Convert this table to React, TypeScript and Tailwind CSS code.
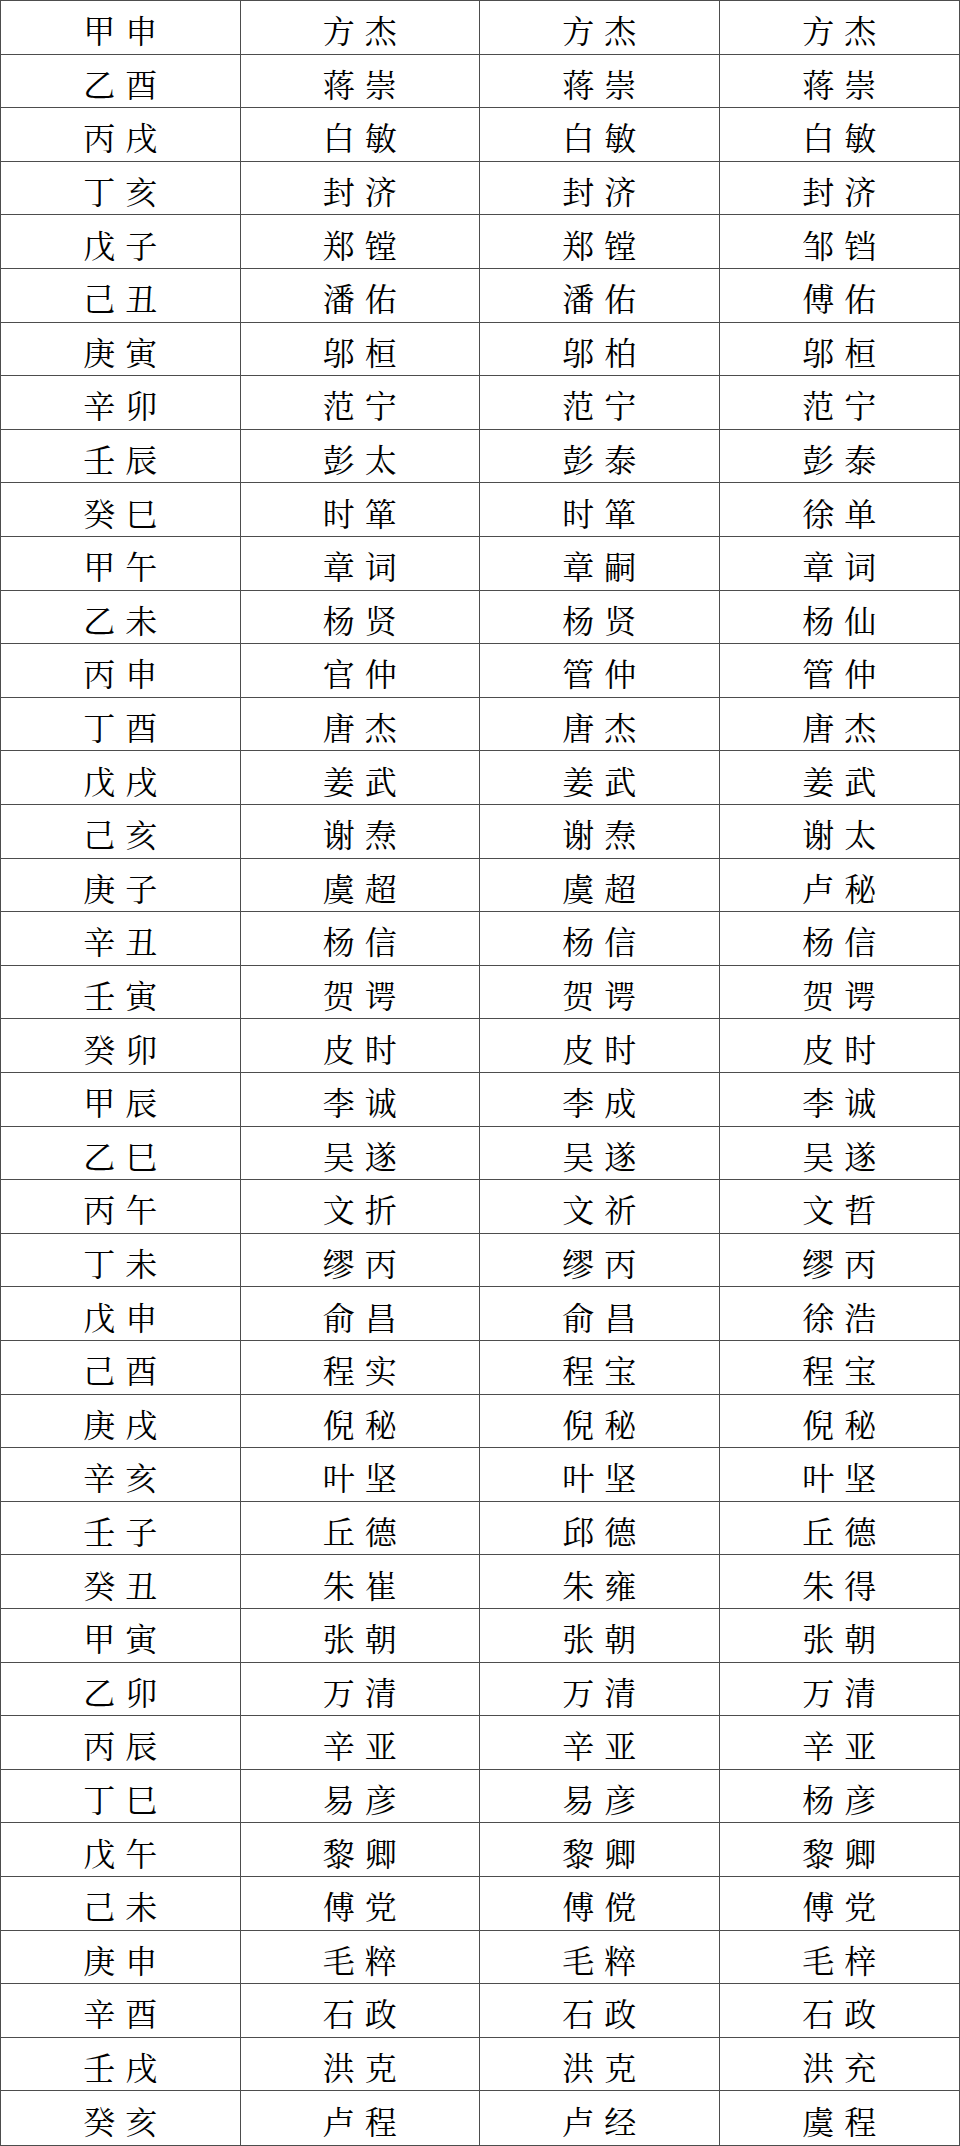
import React from 'react';

const rows: string[][] = [
  ['甲申', '方杰', '方杰', '方杰'],
  ['乙酉', '蒋崇', '蒋崇', '蒋崇'],
  ['丙戌', '白敏', '白敏', '白敏'],
  ['丁亥', '封济', '封济', '封济'],
  ['戊子', '郑镗', '郑镗', '邹铛'],
  ['己丑', '潘佑', '潘佑', '傅佑'],
  ['庚寅', '邬桓', '邬柏', '邬桓'],
  ['辛卯', '范宁', '范宁', '范宁'],
  ['壬辰', '彭太', '彭泰', '彭泰'],
  ['癸巳', '时箪', '时箪', '徐单'],
  ['甲午', '章词', '章嗣', '章词'],
  ['乙未', '杨贤', '杨贤', '杨仙'],
  ['丙申', '官仲', '管仲', '管仲'],
  ['丁酉', '唐杰', '唐杰', '唐杰'],
  ['戊戌', '姜武', '姜武', '姜武'],
  ['己亥', '谢焘', '谢焘', '谢太'],
  ['庚子', '虞超', '虞超', '卢秘'],
  ['辛丑', '杨信', '杨信', '杨信'],
  ['壬寅', '贺谔', '贺谔', '贺谔'],
  ['癸卯', '皮时', '皮时', '皮时'],
  ['甲辰', '李诚', '李成', '李诚'],
  ['乙巳', '吴遂', '吴遂', '吴遂'],
  ['丙午', '文折', '文祈', '文哲'],
  ['丁未', '缪丙', '缪丙', '缪丙'],
  ['戊申', '俞昌', '俞昌', '徐浩'],
  ['己酉', '程实', '程宝', '程宝'],
  ['庚戌', '倪秘', '倪秘', '倪秘'],
  ['辛亥', '叶坚', '叶坚', '叶坚'],
  ['壬子', '丘德', '邱德', '丘德'],
  ['癸丑', '朱崔', '朱雍', '朱得'],
  ['甲寅', '张朝', '张朝', '张朝'],
  ['乙卯', '万清', '万清', '万清'],
  ['丙辰', '辛亚', '辛亚', '辛亚'],
  ['丁巳', '易彦', '易彦', '杨彦'],
  ['戊午', '黎卿', '黎卿', '黎卿'],
  ['己未', '傅党', '傅傥', '傅党'],
  ['庚申', '毛粹', '毛粹', '毛梓'],
  ['辛酉', '石政', '石政', '石政'],
  ['壬戌', '洪克', '洪克', '洪充'],
  ['癸亥', '卢程', '卢经', '虞程'],
];

export default function App() {
  return (
    <div className="w-[960px] h-[2146px] bg-white border border-[#4d4d4d] grid grid-cols-4 grid-rows-[repeat(40,minmax(0,1fr))] font-['Noto_Serif_CJK_SC','Noto_Sans_CJK_SC',serif] text-black">
      {rows.map((row, r) =>
        row.map((cell, c) => (
          <div
            key={`${r}-${c}`}
            className={`flex items-center justify-center pl-[10px] pt-1 text-[32px] leading-none tracking-[10px] border-[#4d4d4d] ${
              c < 3 ? 'border-r' : ''
            } ${r < rows.length - 1 ? 'border-b' : ''}`}
          >
            {cell}
          </div>
        ))
      )}
    </div>
  );
}
